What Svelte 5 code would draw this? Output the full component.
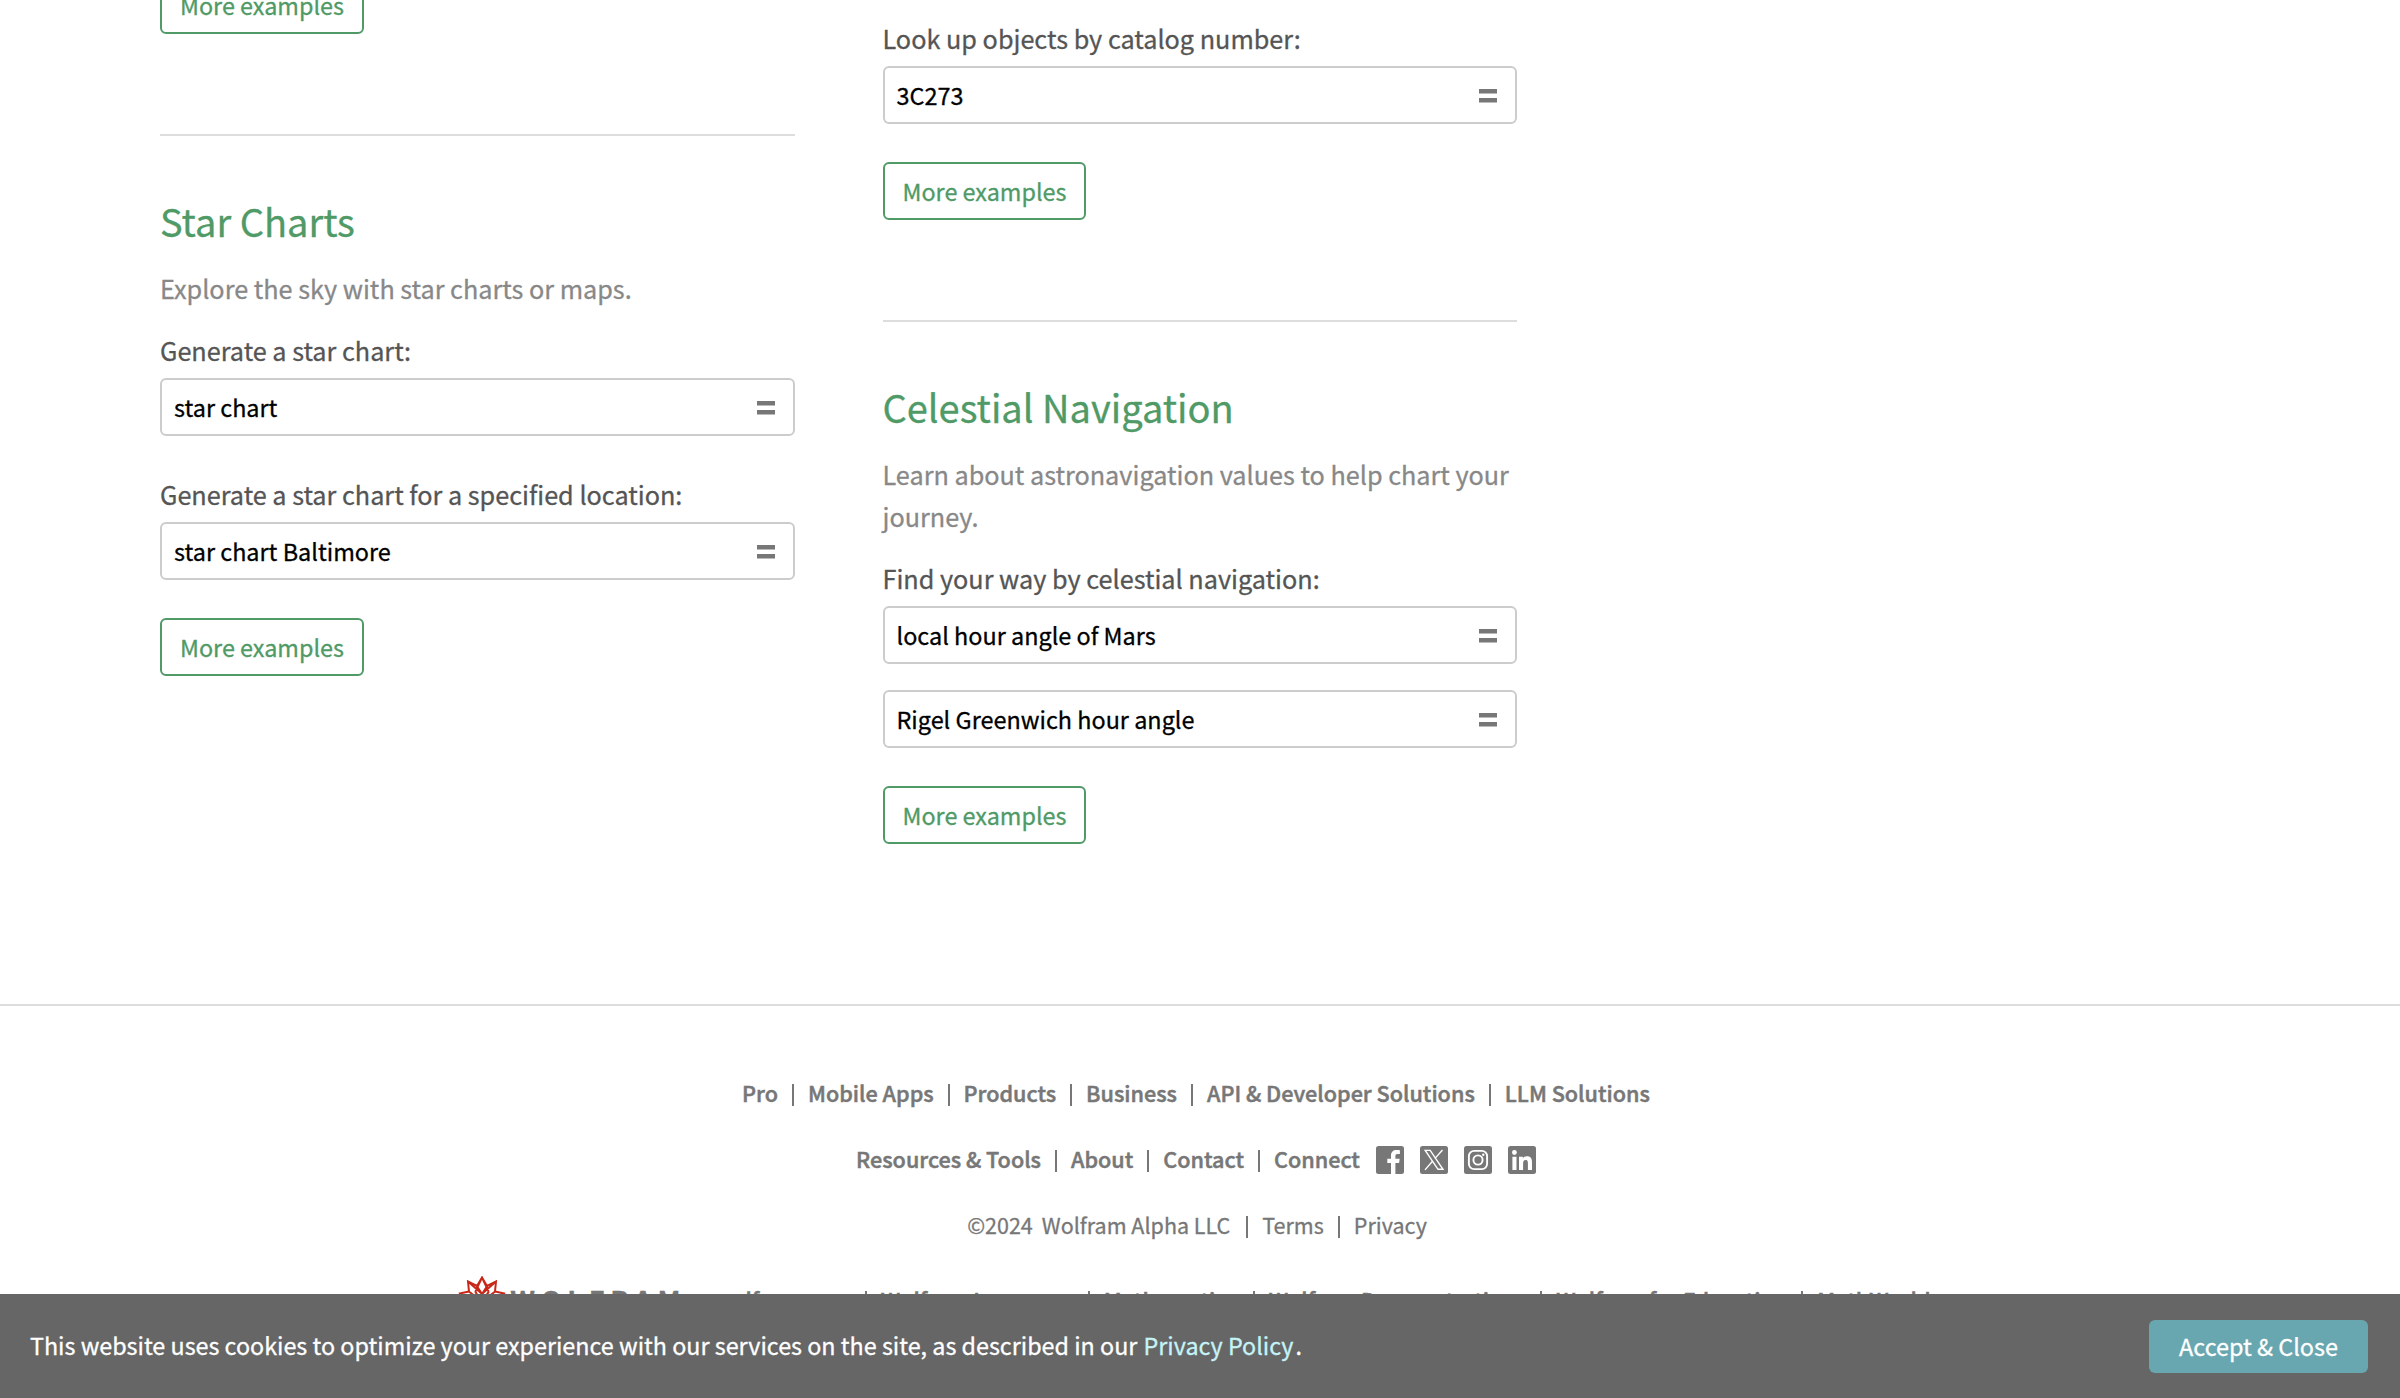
<script>
  const links = ['Pro', 'Mobile Apps', 'Products', 'Business', 'API & Developer Solutions', 'LLM Solutions'];
  const more = ['Resources & Tools', 'About', 'Contact', 'Connect'];
  const sites = ['wolfram.com', 'Wolfram Language', 'Mathematica', 'Wolfram Demonstrations', 'Wolfram for Education', 'MathWorld'];
</script>

{#snippet query(text)}
  <a class="query" href="#query">
    <span>{text}</span>
    <svg class="equals" viewBox="0 0 18 14"><path d="M0 0h18v4.500H0zM0 9h18v4.500H0z" /></svg>
  </a>
{/snippet}

{#snippet moreButton()}
  <a class="more" href="#more">More examples</a>
{/snippet}

<div class="page">
  <main>
    <div class="column">
      <section class="cut">{@render moreButton()}</section>
      <section class="topic">
        <h2>Star Charts</h2>
        <p class="desc">Explore the sky with star charts or maps.</p>
        <p class="label">Generate a star chart:</p>
        {@render query('star chart')}
        <p class="label next">Generate a star chart for a specified location:</p>
        {@render query('star chart Baltimore')}
        {@render moreButton()}
      </section>
    </div>
    <div class="column">
      <section class="catalog">
        <p class="label">Look up objects by catalog number:</p>
        {@render query('3C273')}
        {@render moreButton()}
      </section>
      <section class="topic">
        <h2>Celestial Navigation</h2>
        <p class="desc">Learn about astronavigation values to help chart your journey.</p>
        <p class="label">Find your way by celestial navigation:</p>
        {@render query('local hour angle of Mars')}
        {@render query('Rigel Greenwich hour angle')}
        {@render moreButton()}
      </section>
    </div>
  </main>

  <footer>
    <ul class="bold">
      {#each links as l}<li>{l}</li>{/each}
    </ul>
    <div class="row">
      <ul class="bold">
        {#each more as l}<li>{l}</li>{/each}
      </ul>
      <div class="social">
        <svg viewBox="0 0 28 28"><rect width="28" height="28" rx="2.5" /><path class="w" d="M15 28V17h-3.700v-4.200H15V9.600c0-3.700 2.200-5.600 5.500-5.600 1.600 0 3 .1 3.400.2v3.900h-2.300c-1.800 0-2.200.9-2.200 2.100v2.600h4.300l-.6 4.200h-3.700V28z" /></svg>
        <svg viewBox="0 0 28 28"><rect width="28" height="28" rx="2.5" /><path class="l" d="M5.200 4.400h5L23 23.300h-5zM22.500 4l-7.700 8.600M12.500 15.300L5 23.900" /></svg>
        <svg viewBox="0 0 28 28"><rect width="28" height="28" rx="2.5" /><rect class="l t" x="4.900" y="4.900" width="18.200" height="18.200" rx="5.300" /><circle class="l t" cx="14" cy="14" r="4.600" /><circle class="w" cx="19.300" cy="8.700" r="1.200" /></svg>
        <svg viewBox="0 0 28 28"><rect width="28" height="28" rx="2.5" /><circle class="w" cx="6.400" cy="6.500" r="2.400" /><path class="w" d="M4.400 10.700h4.100V24H4.400zM11 10.700h3.900v1.800c.7-1.300 2.100-2.200 4-2.200 4.200 0 5.100 2.700 5.100 6.300V24h-4.100v-6.500c0-1.600 0-3.600-2.200-3.600s-2.600 1.700-2.600 3.400V24H11z" /></svg>
      </div>
    </div>
    <ul class="legal">
      <li><span class="year">©2024</span><span class="owner">Wolfram Alpha LLC</span></li><li>Terms</li><li>Privacy</li>
    </ul>
    <div class="row sites">
      <svg class="spikey" viewBox="0 0 48 48"><path d="M24 1.500l5 8.500 9-4.500-1 10 9 2-6 8.500 5 9-10 2-2 9-9-4-9 4-2-9-10-2 5-9-6-8.500 9-2-1-10 9 4.500zM24 1.500L19.500 11l4.500 7 4.500-7zM10 5.500L24 18l14-12.500M19 10l-1.500 6L24 26l6.500-10L29 10M11 15.500L24 26l13-10.500" /></svg>
      <span class="wordmark">WOLFRAM</span>
      <ul class="bold">
        {#each sites as l}<li>{l}</li>{/each}
      </ul>
    </div>
  </footer>

  <aside class="cookies">
    <p>This website uses cookies to optimize your experience with our services on the site, as described in our <a href="#privacy">Privacy Policy</a>.</p>
    <button>Accept &amp; Close</button>
  </aside>
</div>

<style>
  :global(body) { margin: 0; background: #fff; }
  .page {
    height: 1398px;
    overflow: hidden;
    position: relative;
    font-family: "Noto Sans CJK SC", "Noto Sans", sans-serif;
    -webkit-text-stroke: 0.3px;
  }
  p, h2, ul { margin: 0; padding: 0; }
  a { text-decoration: none; color: inherit; }
  main { display: flex; gap: 88px; padding-left: 160px; height: 1004px; }
  .column { width: 634.5px; }
  .cut { margin-top: -62px; }
  .catalog { padding-top: 17px; }
  .topic { margin-top: 100px; border-top: 2px solid #ddd; padding-top: 60px; }
  h2 { font-weight: 400; font-size: 38px; line-height: 50px; color: #4f9a66; margin-bottom: 21px; }
  .desc, .label { font-size: 25.22px; line-height: 42px; color: #888; }
  .label { color: #555; margin-bottom: 7px; }
  .desc + .label { margin-top: 20px; }
  .label.next { margin-top: 37px; }
  .query {
    display: flex;
    align-items: center;
    justify-content: space-between;
    box-sizing: border-box;
    height: 58px;
    padding: 0 18px 0 12px;
    border: 2px solid #ccc;
    border-radius: 6px;
    font-size: 23.42px;
    line-height: 54px;
    color: #000;
  }
  .query + .query { margin-top: 26px; }
  .equals { width: 18px; height: 14px; margin-top: 2px; fill: #777; }
  .more {
    display: block;
    width: fit-content;
    margin-top: 38px;
    padding: 0 18px;
    border: 2px solid #4f9a66;
    border-radius: 6px;
    font-size: 23.35px;
    line-height: 54px;
    color: #4f9a66;
  }
  footer {
    display: flex;
    flex-direction: column;
    align-items: center;
    gap: 24px;
    padding: 66px 8px 0 0;
    border-top: 2px solid #ddd;
    color: #777;
    font-size: 21.62px;
    line-height: 42px;
  }
  footer ul { display: flex; list-style: none; white-space: nowrap; }
  li { display: flex; align-items: center; }
  li + li::before { content: ""; width: 2px; height: 22px; margin: 3px 14px 0; background: #777; }
  .bold { font-weight: 500; -webkit-text-stroke: 0.5px; }
  .legal { font-size: 21.5px; padding-left: 2px; }
  .year { margin-right: 9px; }
  .owner { margin-right: 2px; }
  .row { display: flex; align-items: center; }
  .social { display: flex; gap: 16px; margin-left: 16px; padding-top: 1px; }
  .social svg { width: 28px; height: 28px; fill: #777; }
  .social .w { fill: #fff; }
  .social .l { fill: none; stroke: #fff; stroke-width: 1.4; }
  .social .t { stroke-width: 1.9; }
  .sites { margin: 6px 3px 0 0; }
  .spikey { width: 48px; height: 48px; flex: none; fill: none; stroke: #c8281a; stroke-width: 2; }
  .wordmark { width: 204px; margin-left: 4px; font-weight: 700; font-size: 27px; letter-spacing: 5.8px; }
  .cookies {
    position: absolute;
    inset: auto 0 0 0;
    height: 104px;
    box-sizing: border-box;
    display: flex;
    align-items: center;
    justify-content: space-between;
    padding: 0 32px 0 30px;
    background: #666;
    color: #fff;
    font-size: 23.32px;
  }
  .cookies p { padding-bottom: 2px; }
  .cookies a { color: #c5f3f7; margin: 0 2px 0 1px; }
  button {
    height: 53px;
    width: 219px;
    border: 0;
    border-radius: 6px;
    background: #68a7b0;
    color: #fff;
    font: 400 23.4px "Noto Sans CJK SC", sans-serif;
    -webkit-text-stroke: inherit;
  }
</style>
